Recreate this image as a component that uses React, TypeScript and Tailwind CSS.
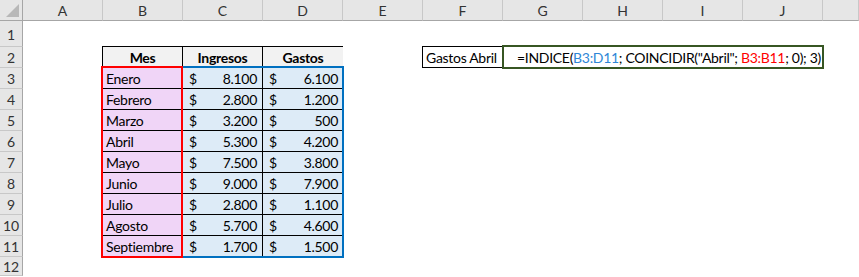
import React from "react";

const COLS = ["A", "B", "C", "D", "E", "F", "G", "H", "I", "J", ""];

const DATA: [string, string, string][] = [
  ["Enero", "8.100", "6.100"],
  ["Febrero", "2.800", "1.200"],
  ["Marzo", "3.200", "500"],
  ["Abril", "5.300", "4.200"],
  ["Mayo", "7.500", "3.800"],
  ["Junio", "9.000", "7.900"],
  ["Julio", "2.800", "1.100"],
  ["Agosto", "5.700", "4.600"],
  ["Septiembre", "1.700", "1.500"],
];

function Money({ value }: { value: string }) {
  return (
    <div className="flex h-full items-center justify-between border-l border-t border-black bg-[#ddebf7] pl-[6px] pr-[5px]">
      <span>$</span>
      <span>{value}</span>
    </div>
  );
}

export default function App() {
  return (
    <div className="relative h-[277px] w-[859px] overflow-hidden bg-white font-['Lato',sans-serif] text-[14px] tracking-[-0.3px] text-black">
      <div className="grid h-full grid-cols-[23px_repeat(10,80px)_36px] grid-rows-[21px_26px_repeat(10,21px)_19px]">
        {/* corner */}
        <div className="relative border-b border-r border-[#a6a6a6] bg-[#e6e6e6]">
          <div className="absolute bottom-[3px] right-[3px] h-0 w-0 border-b-[13px] border-l-[13px] border-b-[#b8b8b8] border-l-transparent" />
        </div>
        {/* column headers */}
        {COLS.map((c, i) => (
          <div
            key={`c-${i}`}
            className="flex items-center justify-center border-b border-r border-b-[#a6a6a6] border-r-[#c8c8c8] bg-[#e6e6e6] pt-[1px] tracking-normal text-[#333]"
          >
            {c}
          </div>
        ))}
        {/* row headers */}
        {Array.from({ length: 12 }, (_, i) => (
          <div
            key={`r-${i}`}
            className="col-start-1 flex items-center justify-center border-b border-r border-b-[#c8c8c8] border-r-[#a6a6a6] bg-[#e6e6e6] pt-[1px] tracking-normal text-[#333]"
            style={{ gridRowStart: i + 2 }}
          >
            {i + 1}
          </div>
        ))}

        {/* table B2:D11 */}
        <div className="relative col-span-3 col-start-3 row-span-10 row-start-3 -ml-px -mt-px grid grid-cols-[80px_80px_81px] grid-rows-[repeat(10,21px)] border-b border-r border-black">
          {["Mes", "Ingresos", "Gastos"].map((h) => (
            <div
              key={h}
              className="flex items-center justify-center border-l border-t border-black bg-[#f2f2f2] font-bold"
            >
              {h}
            </div>
          ))}
          {DATA.map(([m, ing, gas]) => (
            <React.Fragment key={m}>
              <div className="flex items-center border-l border-t border-black bg-[#f0d5f7] pl-[3px]">
                {m}
              </div>
              <Money value={ing} />
              <Money value={gas} />
            </React.Fragment>
          ))}
          {/* reference highlights */}
          <div className="pointer-events-none absolute left-[79px] top-[20px] h-[192px] w-[163px] border-2 border-[#0070c0]" />
          <div className="pointer-events-none absolute left-[-1px] top-[20px] h-[192px] w-[82px] border-2 border-[#ff0000]" />
        </div>

        {/* F2 label */}
        <div className="col-start-7 row-start-3 -ml-px -mt-px flex items-center whitespace-nowrap border border-black pl-[3px]">
          Gastos Abril
        </div>

        {/* G2 formula */}
        <div className="relative col-span-4 col-start-8 row-start-3 -ml-px -mt-[2px] mb-[-1px] mr-[-1px] flex items-center whitespace-nowrap border-2 border-[#375623] pl-[13px]">
          <span>
            =INDICE(<span className="text-[#2e86d6]">B3:D11</span>; COINCIDIR("Abril";{" "}
            <span className="text-[#ff0000]">B3:B11</span>; 0); 3)
          </span>
        </div>
      </div>
    </div>
  );
}
